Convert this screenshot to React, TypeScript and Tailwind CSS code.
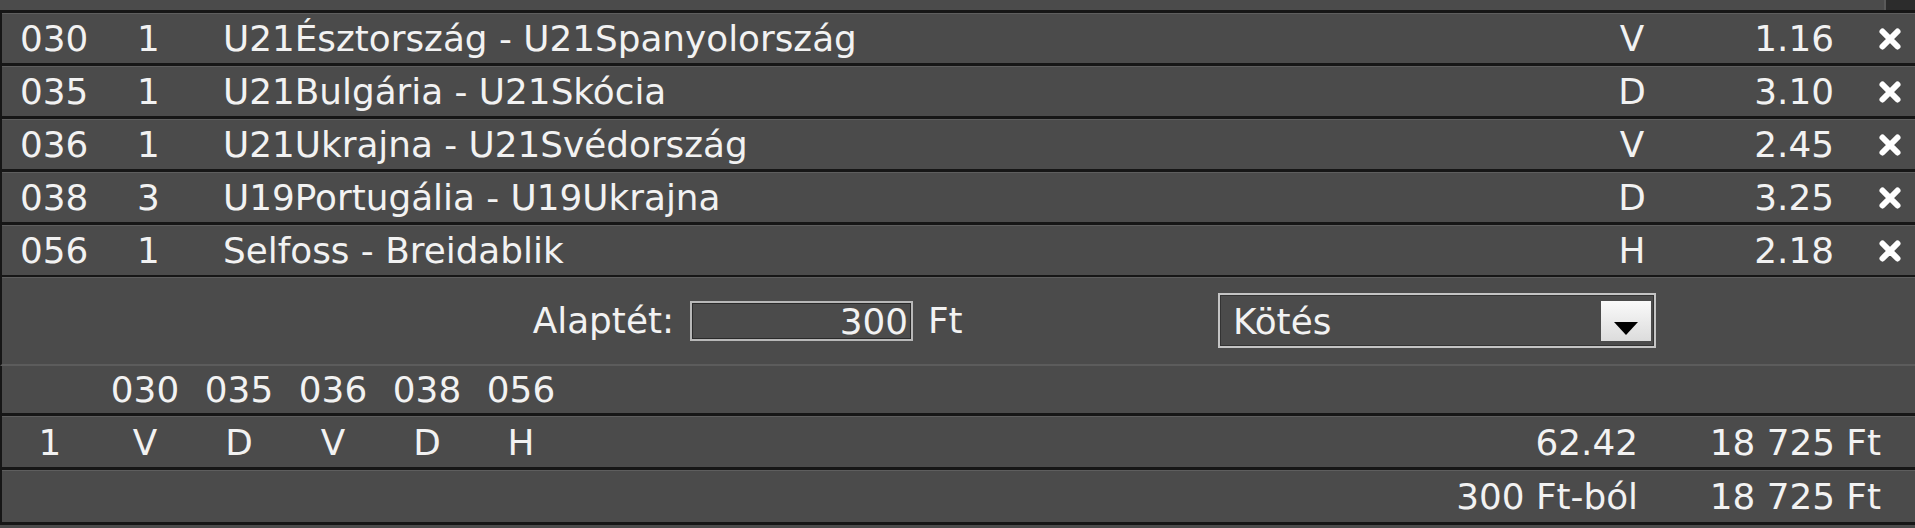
import React from 'react';

const bets = [
  { code: '030', mt: '1', match: 'U21Észtország - U21Spanyolország', tip: 'V', odds: '1.16' },
  { code: '035', mt: '1', match: 'U21Bulgária - U21Skócia', tip: 'D', odds: '3.10' },
  { code: '036', mt: '1', match: 'U21Ukrajna - U21Svédország', tip: 'V', odds: '2.45' },
  { code: '038', mt: '3', match: 'U19Portugália - U19Ukrajna', tip: 'D', odds: '3.25' },
  { code: '056', mt: '1', match: 'Selfoss - Breidablik', tip: 'H', odds: '2.18' },
];

const RemoveIcon = () => (
  <svg width="24" height="24" viewBox="0 0 24 24">
    <path d="M4.5 4.5 L19.5 19.5 M19.5 4.5 L4.5 19.5" stroke="#ffffff" strokeWidth="6" strokeLinecap="round" />
  </svg>
);

export default function App() {
  return (
    <div className="w-[1915px] h-[528px] overflow-hidden bg-[#4b4b4b] text-[#f2f2f2] text-[35.8px] leading-none font-['DejaVu_Sans',Verdana,sans-serif]">
      {/* top strip */}
      <div className="flex h-[10px]">
        <div className="flex-1 bg-[#4b4b4b]" />
        <div className="w-[31px] bg-[#2c2c2c] border-l-2 border-[#5a5a5a]" />
      </div>

      {/* selected bets */}
      {bets.map((b) => (
        <div
          key={b.code}
          className="flex items-center h-[53px] pt-[2px] pr-[13px] border-t-[3px] border-l-2 border-[#161616] shadow-[inset_0_1px_0_#5e5e5e]"
        >
          <span className="w-[135px] pl-[18px]">{b.code}</span>
          <span className="w-[86px]">{b.mt}</span>
          <span className="flex-1 whitespace-nowrap">{b.match}</span>
          <span className="w-[60px] text-center">{b.tip}</span>
          <span className="w-[172px] text-right">{b.odds}</span>
          <span className="ml-[44px] flex">
            <RemoveIcon />
          </span>
        </div>
      ))}

      {/* stake */}
      <div className="flex items-center h-[91px] border-t-2 border-l-2 border-[#161616] border-b-2 border-b-[#5c5c5c] shadow-[inset_0_1px_0_#5e5e5e]">
        <div className="flex items-center w-[1216px]">
          <span className="w-[672px] text-right">Alaptét:</span>
          <div className="ml-[16px] w-[223px] h-[40px] border-2 border-[#b8b8b8] shadow-[inset_0_0_0_1px_#2a2a2a] flex items-center justify-end pr-[3px] pt-[2px]">
            300
          </div>
          <span className="ml-[15px]">Ft</span>
        </div>
        <div className="w-[438px] h-[55px] border-2 border-[#c4c4c4] shadow-[inset_0_0_0_1px_#333333] flex items-center pl-[13px] pr-[3px]">
          <span className="flex-1 pt-[2px]">Kötés</span>
          <div className="w-[50px] h-[40px] bg-gradient-to-b from-[#fafafa] to-[#dcdcdc] flex items-end justify-center pb-[6px]">
            <svg width="24" height="13" viewBox="0 0 24 13">
              <path d="M0 0 H24 L12 13 Z" fill="#000000" />
            </svg>
          </div>
        </div>
      </div>

      {/* combination header */}
      <div className="flex items-center h-[47px] pl-[96px] border-l-2 border-[#161616]">
        {bets.map((b) => (
          <span key={b.code} className="w-[94px] text-center">
            {b.code}
          </span>
        ))}
      </div>

      {/* combination row */}
      <div className="flex items-center h-[54px] pt-[2px] border-t-[3px] border-l-2 border-[#161616] shadow-[inset_0_1px_0_#5e5e5e]">
        <span className="w-[96px] text-center">1</span>
        {bets.map((b) => (
          <span key={b.code} className="w-[94px] text-center">
            {b.tip}
          </span>
        ))}
        <span className="flex-1 text-right">62.42</span>
        <span className="w-[277px] pr-[34px] text-right">18 725 Ft</span>
      </div>

      {/* total */}
      <div className="flex items-center h-[58px] pt-[2px] border-t-[3px] border-b-[3px] border-l-2 border-[#161616] shadow-[inset_0_1px_0_#5e5e5e]">
        <span className="flex-1 text-right">300 Ft-ból</span>
        <span className="w-[277px] pr-[34px] text-right">18 725 Ft</span>
      </div>
    </div>
  );
}
